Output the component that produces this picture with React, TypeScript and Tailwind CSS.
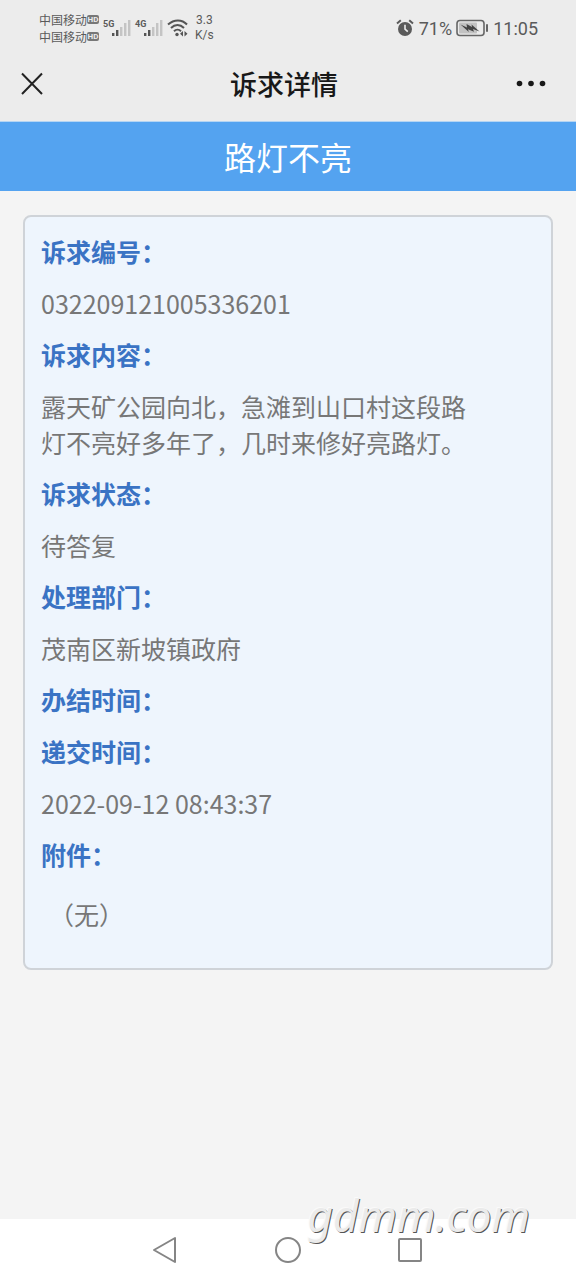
import React from 'react';

interface Field {
  label: string;
  value?: string;
}

const fields: Field[] = [
  { label: '诉求编号：', value: '032209121005336201' },
  { label: '诉求内容：', value: '露天矿公园向北，急滩到山口村这段路灯不亮好多年了，几时来修好亮路灯。' },
  { label: '诉求状态：', value: '待答复' },
  { label: '处理部门：', value: '茂南区新坡镇政府' },
  { label: '办结时间：' },
  { label: '递交时间：', value: '2022-09-12 08:43:37' },
];

const HdBadge = () => (
  <span className="flex h-[9px] w-3 items-center justify-center rounded-xs bg-[#777] font-['Roboto',sans-serif] text-[8px] leading-none font-bold text-[#ececec]">
    HD
  </span>
);

const Signal = ({ label }: { label: string }) => (
  <div className="flex items-start">
    <span className="w-[9px] font-['Roboto',sans-serif] text-[9px] leading-3 font-bold">{label}</span>
    <svg width="19" height="20" viewBox="0 0 19 20" aria-hidden="true">
      <rect x="0" y="15" width="2.4" height="3" fill="#555" />
      <rect x="4" y="12" width="2.4" height="6" fill="#555" />
      <rect x="8" y="9" width="2.4" height="9" fill="#c4c4c4" />
      <rect x="12" y="5" width="2.4" height="13" fill="#c4c4c4" />
      <rect x="16" y="2" width="2.4" height="16" fill="#c4c4c4" />
    </svg>
  </div>
);

const StatusBar = () => (
  <div className="flex h-14 items-center justify-between pr-[38px] pl-[39px] text-[#5a5a5a]">
    <div className="flex items-center">
      <div className="text-[12px] leading-[17px]">
        <div className="flex items-center">中国移动<HdBadge /></div>
        <div className="flex items-center">中国移动<HdBadge /></div>
      </div>
      <div className="ml-1 flex gap-1">
        <Signal label="5G" />
        <Signal label="4G" />
      </div>
      <svg className="ml-1" width="22" height="20" viewBox="0 0 22 20" fill="none" stroke="#555" strokeWidth="2" aria-hidden="true">
        <path d="M1 6.5C7 1 15 1 20 6.5" />
        <path d="M4 10C8 6 13 6 17 10" />
        <path d="M7 13.3C9 11.3 12 11.3 14 13.3" />
        <circle cx="10" cy="16.5" r="1.7" fill="#555" stroke="none" />
        <path d="M16 13l-3 2.8 3 2.8zM17.5 13l3 2.8-3 2.8z" fill="#555" stroke="none" />
      </svg>
      <div className="ml-1.5 text-center font-['Roboto',sans-serif] text-[12px] leading-[15px]">
        <div>3.3</div>
        <div>K/s</div>
      </div>
    </div>
    <div className="flex items-center gap-1 font-['Roboto',sans-serif] text-[18px]">
      <svg width="19" height="18" viewBox="0 0 19 18" fill="none" aria-hidden="true">
        <circle cx="9" cy="10" r="7" fill="#5a5a5a" />
        <path d="M1 4.5L4.8 1.2M17 4.5L13.2 1.2" stroke="#5a5a5a" strokeWidth="2" />
        <path d="M9 5.8V10.2L11.8 12.6" stroke="#ececec" strokeWidth="1.6" />
      </svg>
      <span>71%</span>
      <svg width="33" height="18" viewBox="0 0 33 18" aria-hidden="true">
        <rect x="1" y="1.5" width="27" height="15" rx="3" fill="none" stroke="#666" strokeWidth="1.6" />
        <rect x="3" y="3.5" width="18" height="11" rx="1" fill="#c2c2c2" />
        <path d="M4.5 5.5L11 8.5 10.5 5 16 8 15.5 5.5 23.5 12.5 17 10 18 12.8 12 10.3 12.8 13z" fill="#444" />
        <rect x="30" y="5" width="2" height="8" rx="1" fill="#666" />
      </svg>
      <span>11:05</span>
    </div>
  </div>
);

const TitleBar = () => (
  <header className="grid h-[65px] grid-cols-[1fr_auto_1fr] items-start pr-7 pl-5">
    <button type="button" aria-label="关闭" className="justify-self-start pt-4">
      <svg width="24" height="24" viewBox="0 0 24 24" stroke="#222" strokeWidth="2" aria-hidden="true">
        <path d="M2 1.5L22 22M22 1.5L2 22" />
      </svg>
    </button>
    <h1 className="pt-2 text-[27px] leading-10 font-medium text-[#181818]">诉求详情</h1>
    <button type="button" aria-label="更多" className="justify-self-end pt-4">
      <svg width="32" height="24" viewBox="0 0 32 24" fill="#181818" aria-hidden="true">
        <circle cx="3.5" cy="11.5" r="2.8" />
        <circle cx="15" cy="11.5" r="2.8" />
        <circle cx="26.5" cy="11.5" r="2.8" />
      </svg>
    </button>
  </header>
);

const NavBar = () => (
  <nav className="relative flex h-[61px] items-center justify-center gap-[96px] bg-white">
    <button type="button" aria-label="返回">
      <svg width="26" height="28" viewBox="0 0 26 28" fill="none" stroke="#858585" strokeWidth="2" strokeLinejoin="round" aria-hidden="true">
        <path d="M2 14L23 2V26z" />
      </svg>
    </button>
    <button type="button" aria-label="主页">
      <svg width="28" height="28" viewBox="0 0 28 28" fill="none" stroke="#858585" strokeWidth="2" aria-hidden="true">
        <circle cx="14" cy="14" r="12" />
      </svg>
    </button>
    <button type="button" aria-label="最近任务">
      <svg width="26" height="28" viewBox="0 0 26 28" fill="none" stroke="#858585" strokeWidth="2" aria-hidden="true">
        <rect x="1" y="3" width="22" height="22" rx="1" />
      </svg>
    </button>
    <span className="absolute right-[46px] bottom-[35px] font-['Noto_Sans',sans-serif] text-[44px] leading-[60px] text-[#ebebeb] italic [text-shadow:1px_1px_0_#555,-1px_-1px_0_#fafafa]">
      gdmm.com
    </span>
  </nav>
);

export default function App() {
  return (
    <div lang="zh-CN" className="flex min-h-screen flex-col bg-[#f4f4f4] font-['Noto_Sans_CJK_SC',sans-serif]">
      <div className="bg-[#ececec]">
        <StatusBar />
        <TitleBar />
      </div>
      <h2 className="border-t border-[#b5d5f3] bg-[#54a3f0] py-2.5 text-center text-[32px] leading-[49px] text-white">
        路灯不亮
      </h2>

      <main className="grow px-[23px] pt-6">
        <dl className="rounded-lg border-2 border-[#cfd3d8] bg-[#eef5fd] px-4 pt-4 pb-9 text-[25px] leading-9 text-[#777]">
          {fields.map((field) => (
            <React.Fragment key={field.label}>
              <dt className="mb-4 font-bold text-[#3a73c4]">{field.label}</dt>
              {field.value && <dd className="mb-[15px] pr-14">{field.value}</dd>}
            </React.Fragment>
          ))}
          <dt className="mb-6 font-bold text-[#3a73c4]">附件：</dt>
          <dd className="pl-2">（无）</dd>
        </dl>
      </main>

      <NavBar />
    </div>
  );
}
